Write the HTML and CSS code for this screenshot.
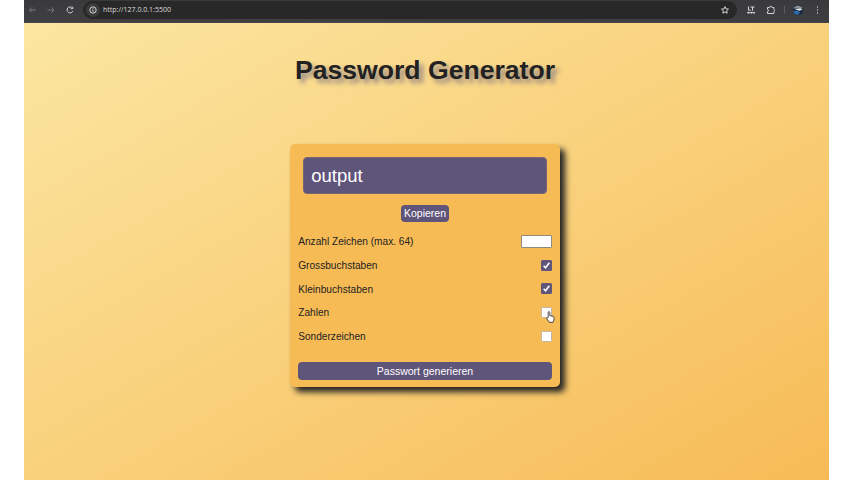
FILE: index.html
```html
<!DOCTYPE html>
<html lang="de">
<head>
<meta charset="utf-8">
<title>Password Generator</title>
<link rel="stylesheet" href="styles.css">
</head>
<body>
<div class="window">
  <header class="toolbar">
    <svg class="icon dim back" viewBox="0 0 10 10"><path d="M8 5H1.500M4.200 2.300L1.500 5l2.700 2.700"/></svg>
    <svg class="icon dim forward" viewBox="0 0 10 10"><path d="M1.500 5H8M5.300 2.300L8 5 5.300 7.700"/></svg>
    <svg class="icon reload" viewBox="0 0 10 10"><path d="M7.800 6.200A3 3 0 1 1 7.400 3M7.800 1.700v2H5.700"/></svg>
    <div class="address">
      <span class="info"><svg class="icon" viewBox="0 0 10 10"><circle cx="5" cy="5" r="3.200"/><path d="M5 4.600v2.100M5 2.900v.8"/></svg></span>
      <span class="url">http://127.0.0.1:5500</span>
      <svg class="icon star" viewBox="0 0 10 10"><path d="M5 1.600l1 2.300 2.500.2-1.900 1.700.6 2.400L5 6.900 2.800 8.200l.6-2.400-1.900-1.700L4 3.900z"/></svg>
    </div>
    <svg class="icon ext" viewBox="0 0 10 10"><path d="M2.500 1.500v3.700h2.200M4.500 2h4M6.500 2v3.700M1 7.700h8M2.500 6.800v1.800M5.500 6.800v1.800M8 6.800v1.800"/></svg>
    <svg class="icon puzzle" viewBox="0 0 10 10"><path d="M1.500 2.500h2a1.200 1.200 0 0 1 2.400 0h2v2a1.100 1.100 0 0 1 0 2v2H1.500v-2a1 1 0 0 0 0-2z"/></svg>
    <span class="divider"></span>
    <svg class="avatar" viewBox="0 0 12 12"><circle cx="6" cy="6" r="5.200" fill="#17283f"/><path d="M1.300 4Q6-1 10.700 4L9 5 2 4.500z" fill="#8b9096"/><path d="M3 5.500l5-1 2.500 1-3 1.200z" fill="#e4e9ed"/><path d="M1.200 7l4-.6L8 8.500 6 11Q2.500 11 1.200 7z" fill="#316aa8"/></svg>
    <svg class="icon more" viewBox="0 0 10 10"><path d="M4.500 1.400v1.200M4.500 4.400v1.200M4.500 7.400v1.200"/></svg>
  </header>
  <main class="page">
    <h1 class="title">Password Generator</h1>
    <form class="card">
      <div class="output">output</div>
      <button class="btn copy" type="button">Kopieren</button>
      <div class="options">
        <label class="row first"><span class="name">Anzahl Zeichen (max. 64)</span><input class="count" type="text"></label>
        <label class="row"><span class="name">Grossbuchstaben</span><span class="check checked"><svg viewBox="0 0 11 11"><path d="M2.600 5.700l2 2L8.300 2.700"/></svg></span></label>
        <label class="row"><span class="name">Kleinbuchstaben</span><span class="check checked"><svg viewBox="0 0 11 11"><path d="M2.600 5.700l2 2L8.300 2.700"/></svg></span></label>
        <label class="row"><span class="name">Zahlen</span><span class="check">
          <svg class="cursor" viewBox="0 0 9 12"><path d="M2.200 6.500V1.600q0-1 .8-1t.8 1v3l3.200.7q1 .3 1 1.300v2.200L7 11.300H3.400L.8 7.800q-.3-.9.500-1z" fill="#fff" stroke="#222" stroke-width=".8"/></svg>
        </span></label>
        <label class="row"><span class="name">Sonderzeichen</span><span class="check"></span></label>
      </div>
      <button class="btn generate" type="button">Passwort generieren</button>
    </form>
  </main>
</div>
</body>
</html>
```
FILE: styles.css
```css
* { box-sizing: border-box; }
body { margin: 0; background: #fff; font-family: "Liberation Sans", Arial, sans-serif; color: #222; }
.window { width: 805px; height: 480px; margin: 0 auto; display: flex; flex-direction: column; overflow: hidden; }
.toolbar { height: 23px; flex: none; display: flex; align-items: center; padding: 0 6px 3px 4px; background: linear-gradient(#373a3a, #3b3b3e 4px, #3f3f42); border-bottom: 1px solid #47434b; }
.icon { width: 10px; height: 10px; flex: none; fill: none; stroke: #d5d5d5; stroke-width: 1; }
.dim { stroke: #77777b; }
.forward { margin-left: 8px; }
.reload { margin-left: 9px; }
.address { width: 654px; height: 18px; margin-left: 8px; padding: 0 7px 0 3px; border-radius: 9px; background: #282828; display: flex; align-items: center; }
.info { width: 14px; height: 14px; border-radius: 50%; background: #3b3b3c; display: flex; align-items: center; justify-content: center; }
.url { margin-left: 3px; padding-top: 1px; font: 7px/12px "Open Sans", sans-serif; color: #ddd; }
.star { margin-left: auto; }
.ext { margin-left: 9px; }
.puzzle { margin-left: 10px; }
.divider { width: 1px; height: 8px; margin-left: 8px; background: #5b5b60; }
.avatar { width: 12px; height: 12px; margin-left: 7px; }
.more { margin-left: 9px; }
.page { flex: 1; display: flex; flex-direction: column; align-items: center; padding: 30.500px 3px 0 0; background: linear-gradient(to bottom right, #fbe6a1, #f9d17c 50%, #f7bb56); }
.title { margin: 0; font-size: 26.600px; line-height: 32px; font-weight: bold; color: #222; text-shadow: 4px 4px 5px rgba(94, 84, 124, .65); white-space: nowrap; }
.card { width: 269.500px; height: 242.500px; margin-top: 58.500px; padding: 12.500px 8px 7px; border-radius: 5px; background: #f7bb56; box-shadow: 5px 5px 6px #222; display: flex; flex-direction: column; }
.output { height: 37px; margin: 0 5px; padding-left: 7px; border: 1px solid #75677a; border-radius: 4px; background: #5f547a; color: #fff; font-size: 18.500px; line-height: 36px; }
.btn { display: block; padding: 0; border: 0; border-radius: 4px; background: #5f547a; color: #fff; font: 10.500px/17px "Liberation Sans", Arial, sans-serif; }
.copy { width: 47.500px; height: 17px; margin: 11px auto 0; }
.options { margin-top: 7px; }
.row { height: 23.600px; display: flex; align-items: center; justify-content: space-between; line-height: 14px; }
.name { padding-top: 1.500px; font-size: 10.120px; }
.first { height: 25px; }
.count { width: 31px; height: 13px; padding: 0; border: 1px solid #8f8a80; border-radius: 1px; background: #fff; }
.check { position: relative; width: 11px; height: 11px; border: 1px solid #c4b5a3; border-radius: 1.500px; background: #fff; }
.checked { border: 0; background: #5f547a; }
.checked svg { display: block; width: 11px; height: 11px; fill: none; stroke: #fff; stroke-width: 1.600; }
.cursor { position: absolute; left: 4px; top: 3px; width: 9px; height: 12px; }
.generate { width: 100%; height: 18px; line-height: 18px; margin-top: auto; }
```
